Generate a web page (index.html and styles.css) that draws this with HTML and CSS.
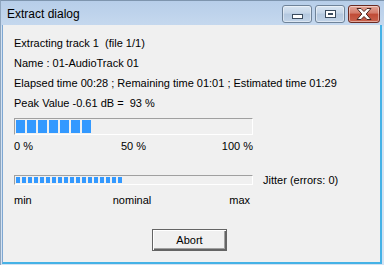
FILE: index.html
```html
<!DOCTYPE html>
<html lang="en">
<head>
    <meta charset="UTF-8">
    <title>Extract dialog</title>
    <link rel="stylesheet" href="styles.css">
</head>
<body>
    <div class="window">
        <div class="titlebar">
            <span class="title">Extract dialog</span>
            <div class="caption-buttons">
                <div class="cap min"><span class="glyph-min"></span></div>
                <div class="cap max"><span class="glyph-max"></span></div>
                <div class="cap close">
                    <svg width="16" height="12" viewBox="0 0 16 12">
                        <path d="M1 0.5h4l3 3l3-3h4l-4.8 5.5l4.8 5.5h-4l-3-3l-3 3h-4l4.8-5.5z" fill="#ffffff" stroke="#4a2620" stroke-width="1" stroke-linejoin="round"/>
                    </svg>
                </div>
            </div>
        </div>
        <div class="client">
            <div class="line">Extracting track 1&nbsp; (file 1/1)</div>
            <div class="line">Name : 01-AudioTrack 01</div>
            <div class="line">Elapsed time 00:28 ; Remaining time 01:01 ; Estimated time 01:29</div>
            <div class="line">Peak Value -0.61 dB =&nbsp; 93 %</div>

            <div class="progress big">
                <div class="fill" style="width: 75px"></div>
            </div>
            <div class="scale">
                <span>0 %</span>
                <span>50 %</span>
                <span>100 %</span>
            </div>

            <div class="jitter-row">
                <div class="progress small">
                    <div class="fill" style="width: 106px"></div>
                </div>
                <span class="jitter-label">Jitter (errors: 0)</span>
            </div>
            <div class="scale scale-jitter">
                <span>min</span>
                <span>nominal</span>
                <span>max</span>
            </div>

            <div class="footer">
                <div class="button default">Abort</div>
            </div>
        </div>
    </div>
</body>
</html>
```

FILE: styles.css
```css
*{
    margin: 0;
    padding: 0;
    box-sizing: border-box;
}
body{
    background-color: #d3e2f2;
    font-family: 'Liberation Sans', Arial, sans-serif;
    font-size: 11px;
    color: #000;
}
.window{
    width: 384px;
    height: 265px;
    display: flex;
    flex-direction: column;
    background: linear-gradient(to bottom, #b7cee9 0, #c5d8ee 24px, #d3e2f2 26px, #d3e2f2);
    border-left: 1px solid #8fa6bf;
    border-top: 1px solid #7e95ae;
}
.titlebar{
    height: 24px;
    display: flex;
    align-items: flex-start;
    padding-left: 6px;
    padding-right: 4px;
}
.title{
    font-size: 12px;
    line-height: 14px;
    margin-top: 6px;
    color: #000;
}
.caption-buttons{
    margin-left: auto;
    margin-top: 4px;
    display: flex;
    gap: 3px;
}
.cap{
    height: 18px;
    width: 30px;
    border: 1px solid #6f8399;
    border-radius: 3px;
    display: flex;
    justify-content: center;
    align-items: center;
    background: linear-gradient(to bottom, #d9e5f2 0, #c4d5e8 45%, #b3c8df 50%, #c2d4e8 100%);
    box-shadow: inset 0 0 0 1px rgba(255,255,255,0.45);
}
.cap.close{
    width: 32px;
    border-color: #6b2a22;
    background: linear-gradient(to bottom, #e3a597 0, #d37a69 45%, #c04b36 50%, #c9624d 100%);
}
.glyph-min{
    width: 11px;
    height: 5px;
    margin-top: 5px;
    background: #fff;
    border: 1px solid #3a4b5e;
}
.glyph-max{
    width: 11px;
    height: 8px;
    border: 1px solid #3a4b5e;
    background: #fff;
    box-shadow: inset 0 0 0 2px #fff, inset 0 0 0 3px #3a4b5e;
}
.client{
    flex: 1;
    margin: 0 2px 1px 1px;
    background: #f0f0f0;
    border-left: 1px solid #7ea7d2;
    border-right: 2px solid #45b2e6;
    border-bottom: 2px solid #45b2e6;
    padding: 8px 0 0 11px;
}
.line{
    line-height: 20px;
    white-space: nowrap;
}
.progress{
    width: 239px;
    border-top: 1px solid #a0a0a0;
    border-left: 1px solid #a0a0a0;
    border-bottom: 1px solid #fff;
    border-right: 1px solid #fff;
    padding: 1px;
    background: #f0f0f0;
}
.progress.big{
    height: 17px;
    margin-top: 5px;
}
.progress.small{
    height: 10px;
}
.fill{
    height: 100%;
}
.big .fill{
    background: repeating-linear-gradient(to right, #3399ff 0, #3399ff 9px, transparent 9px, transparent 11px);
}
.small .fill{
    background: repeating-linear-gradient(to right, #3399ff 0, #3399ff 4px, transparent 4px, transparent 6px);
}
.scale{
    width: 239px;
    display: grid;
    grid-template-columns: 1fr auto 1fr;
    line-height: 20px;
    margin-top: 1px;
}
.scale span:last-child{
    justify-self: end;
}
.scale-jitter{
    margin-top: 3px;
    padding-right: 3px;
}
.jitter-row{
    display: flex;
    align-items: center;
    gap: 10px;
    margin-top: 17px;
}
.jitter-label{
    line-height: 14px;
}
.footer{
    padding-left: 138px;
    margin-top: 19px;
}
.button{
    width: 75px;
    height: 22px;
    display: flex;
    justify-content: center;
    align-items: center;
    background: #f0f0f0;
}
.button.default{
    border: 1px solid #646464;
    box-shadow: inset 1px 1px #ffffff, inset -1px -1px #646464, inset -2px -2px #a0a0a0;
}
```
